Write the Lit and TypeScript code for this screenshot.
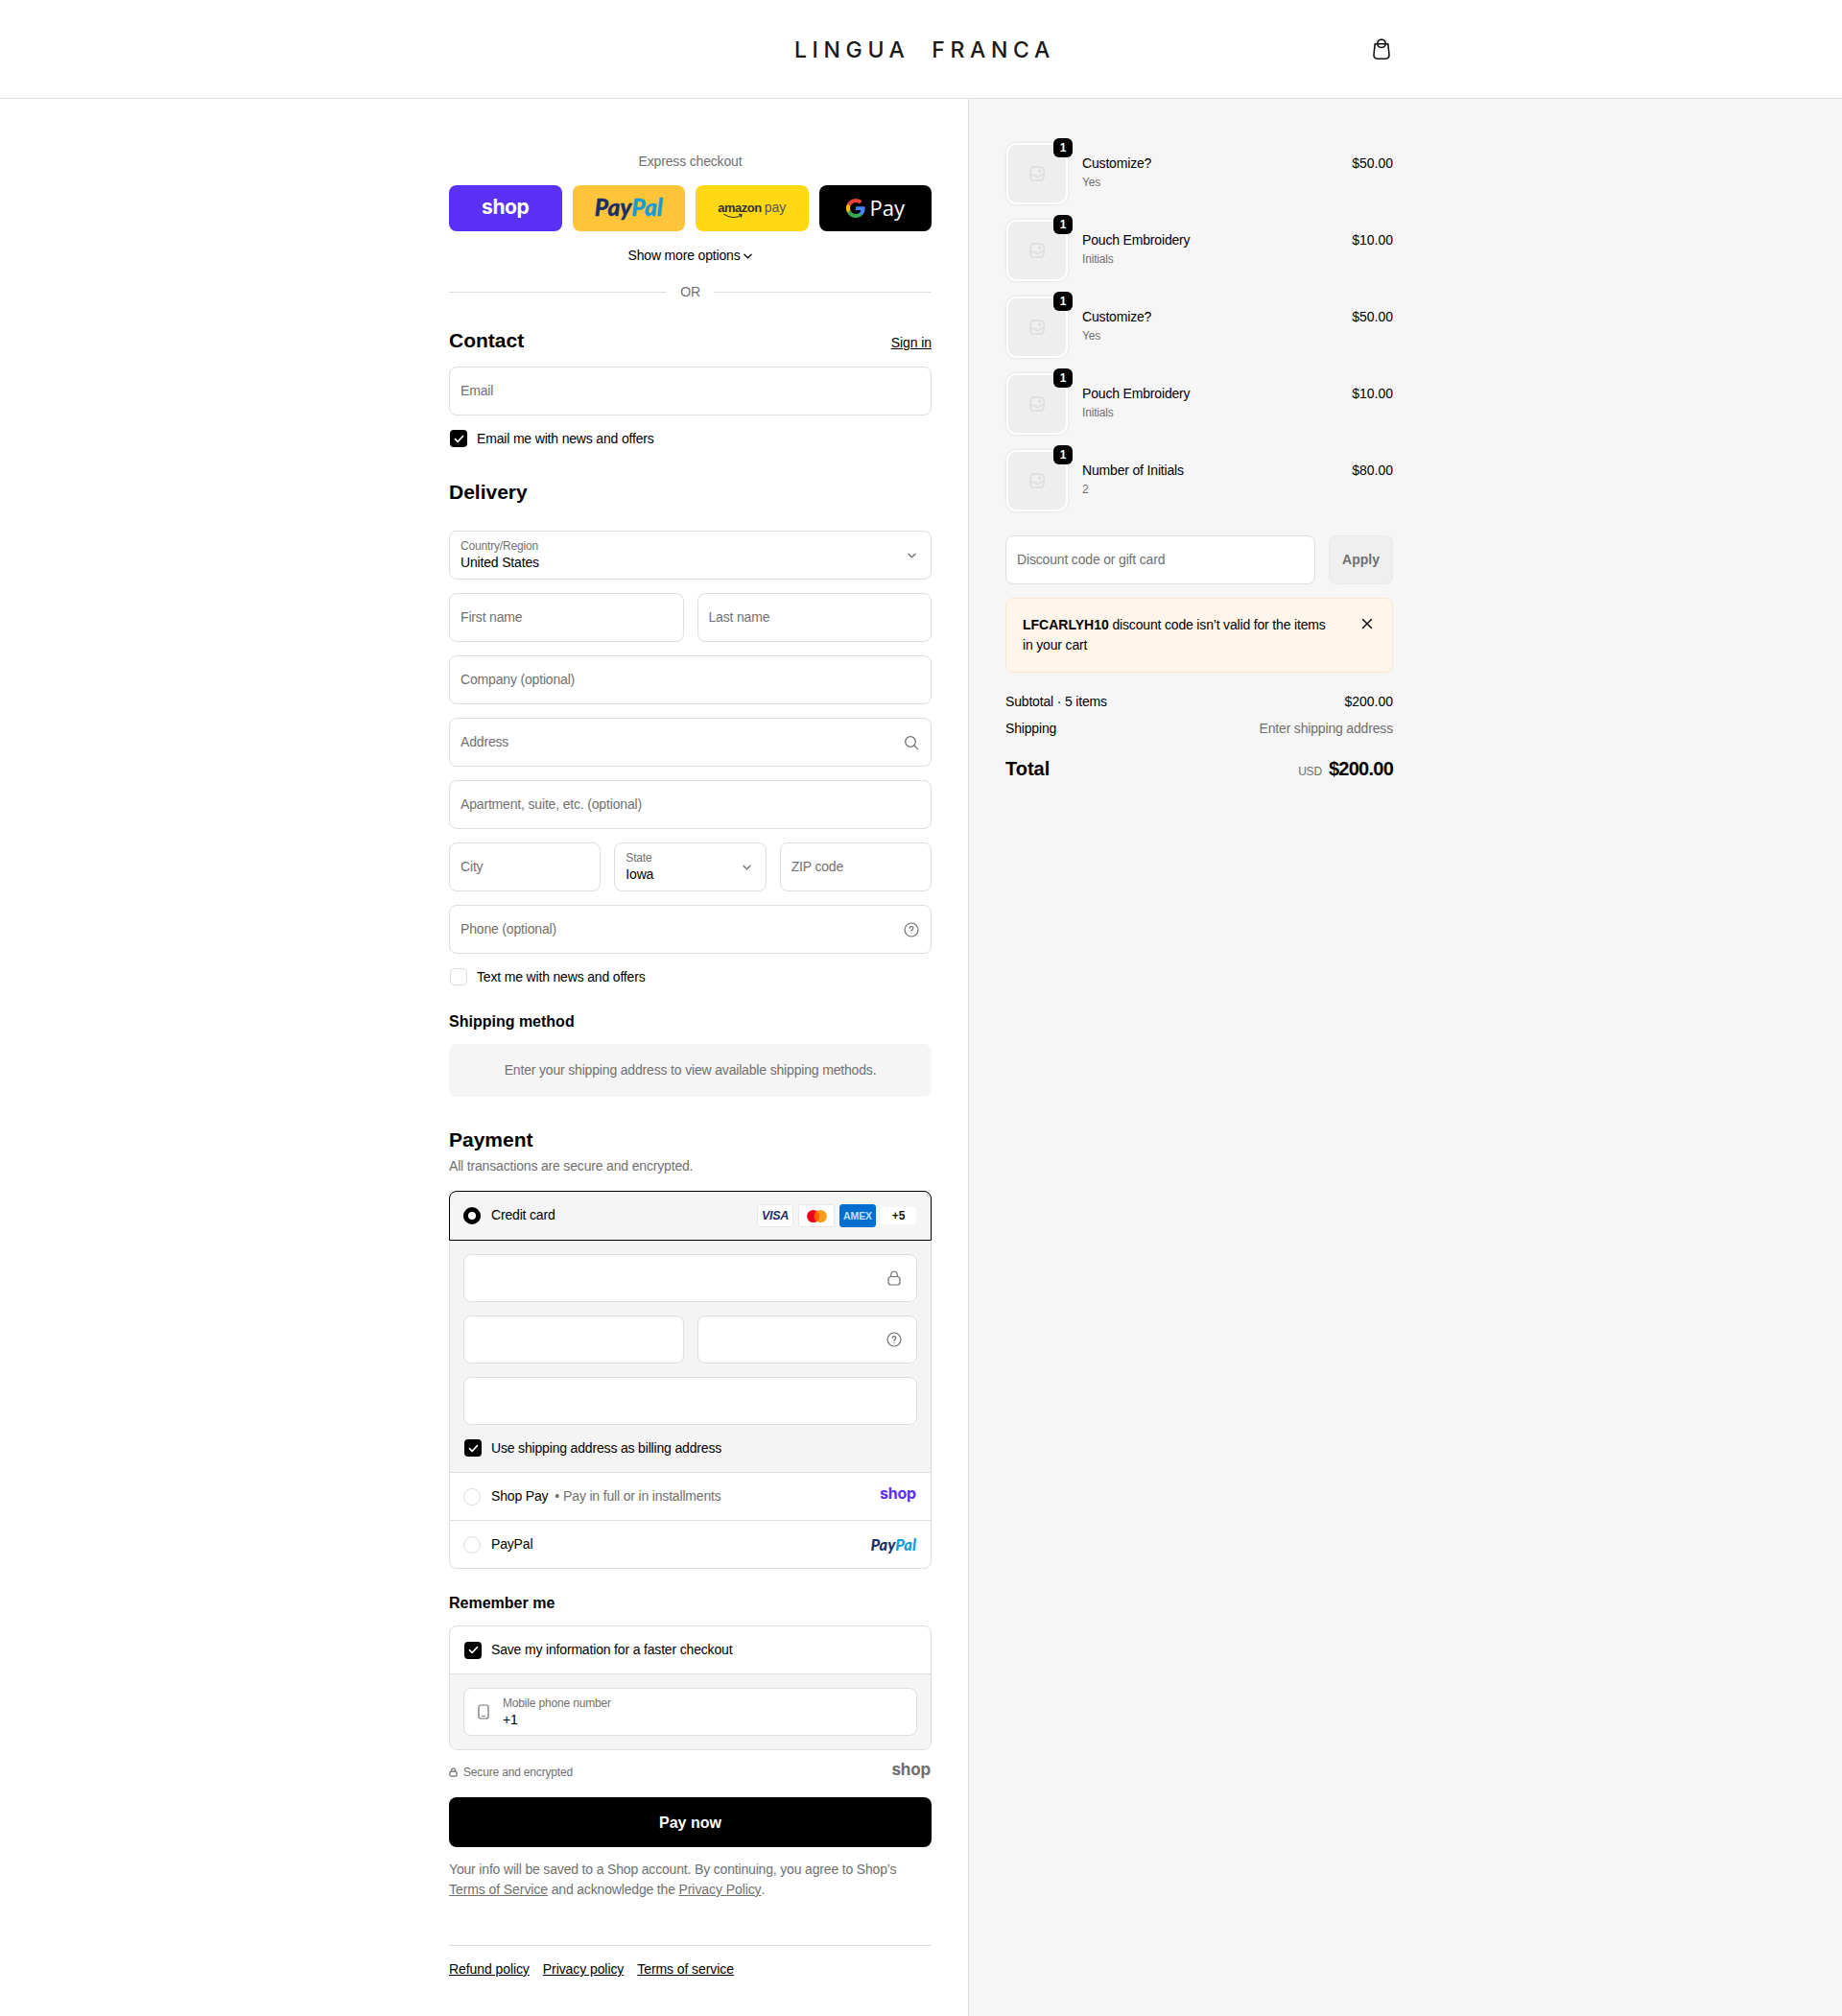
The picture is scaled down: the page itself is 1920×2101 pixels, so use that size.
import { LitElement, html, css, svg } from 'lit';
import { customElement } from 'lit/decorators.js';

const items = [
  { title: 'Customize?', sub: 'Yes', price: '$50.00' },
  { title: 'Pouch Embroidery', sub: 'Initials', price: '$10.00' },
  { title: 'Customize?', sub: 'Yes', price: '$50.00' },
  { title: 'Pouch Embroidery', sub: 'Initials', price: '$10.00' },
  { title: 'Number of Initials', sub: '2', price: '$80.00' },
];

const chevron = html`<svg class="chev" viewBox="0 0 10 6" width="10" height="6" fill="none" stroke="currentColor" stroke-width="1.4" stroke-linecap="round" stroke-linejoin="round"><path d="M1 1l4 4 4-4" /></svg>`;
const helpIcon = html`<svg class="ico" viewBox="0 0 16 16" width="16" height="16" fill="none" stroke="#707070" stroke-width="1.2" stroke-linecap="round"><circle cx="8" cy="8" r="7" /><path d="M6.2 6.3a1.8 1.8 0 1 1 2.7 1.6c-.6.4-.9.7-.9 1.4" /><path d="M8 11.5v.1" /></svg>`;
const lockIcon = html`<svg class="ico" viewBox="0 0 16 16" width="16" height="16" fill="none" stroke="#707070" stroke-width="1.2" stroke-linejoin="round"><rect x="2" y="6.5" width="12" height="8.5" rx="2.5" /><path d="M4.8 6.5V4.2a3.2 3.2 0 0 1 6.4 0v2.3" /></svg>`;
const searchIcon = html`<svg class="ico" viewBox="0 0 16 16" width="16" height="16" fill="none" stroke="#707070" stroke-width="1.3" stroke-linecap="round"><circle cx="7" cy="7" r="5.3" /><path d="M11 11l3.6 3.6" /></svg>`;
const checkMark = html`<svg viewBox="0 0 12 10" width="11" height="9" fill="none" stroke="#fff" stroke-width="1.8" stroke-linecap="round" stroke-linejoin="round"><path d="M1.5 5.2l3 3 6-6.5" /></svg>`;

// the multi coloured G of the Google Pay button
const gMark = svg`<path fill="#4285F4" d="M19.6 10.2c0-.7-.1-1.4-.2-2H10v3.8h5.4a4.6 4.6 0 0 1-2 3v2.5h3.2c1.900-1.700 3-4.300 3-7.300z"/><path fill="#34A853" d="M10 20c2.700 0 5-.9 6.600-2.500l-3.200-2.500c-.9.600-2 1-3.400 1-2.600 0-4.800-1.800-5.600-4.100H1.100v2.600A10 10 0 0 0 10 20z"/><path fill="#FBBC05" d="M4.400 11.900a6 6 0 0 1 0-3.800V5.500H1.100a10 10 0 0 0 0 9z"/><path fill="#EA4335" d="M10 4c1.500 0 2.800.5 3.800 1.500l2.900-2.900A10 10 0 0 0 1.100 5.500l3.300 2.600C5.200 5.800 7.400 4 10 4z"/>`;

@customElement('app-root')
export class AppRoot extends LitElement {
  static styles = css`
    :host {
      display: block;
      min-height: 2101px;
      font-family: 'Liberation Sans', Arial, sans-serif;
      font-size: 14px;
      line-height: 21px;
      letter-spacing: -0.17px;
      color: #000;
      background: #fff;
    }
    * {
      box-sizing: border-box;
    }
    a {
      color: inherit;
      letter-spacing: -0.08px;
    }
    b,
    h2,
    h3,
    .apply,
    .pay-now,
    .badge,
    .price,
    .num {
      letter-spacing: 0;
    }
    .muted {
      color: #707070;
    }

    .top {
      height: 103px;
      border-bottom: 1px solid #dedede;
      position: relative;
      display: flex;
      align-items: center;
      justify-content: center;
    }
    .logo {
      font-family: Inter, sans-serif;
      font-size: 23px;
      font-weight: 500;
      letter-spacing: 5.65px;
      word-spacing: 11px;
      color: #1a1a1a;
      line-height: 28px;
      margin: 1px 0 0 8px;
    }
    .bag {
      position: absolute;
      left: 1429.5px;
      top: 40px;
    }

    .page {
      display: flex;
      min-height: 1998px;
    }
    .main {
      width: 1010px;
      flex: none;
      border-right: 1px solid #dedede;
      padding: 55px 38px 0 468px;
    }
    .side {
      flex: 1;
      background: #f6f6f6;
      padding: 45px 0 0 38px;
    }
    .side-in {
      width: 404px;
    }

    .center {
      text-align: center;
    }
    .express {
      display: grid;
      grid-template-columns: repeat(4, 1fr);
      gap: 11px;
      margin-top: 14px;
    }
    .pay-btn {
      height: 48px;
      border-radius: 8px;
      display: flex;
      align-items: center;
      justify-content: center;
      gap: 5px;
    }
    .b-shop {
      background: #5a31f4;
    }
    .b-pp {
      background: #ffc439;
    }
    .b-amz {
      background: #ffd814;
    }
    .b-g {
      background: #000;
    }
    .shop-mark {
      font-family: Inter, sans-serif;
      font-weight: 700;
      letter-spacing: -0.4px;
      color: #fff;
      font-size: 21px;
      line-height: 1;
      margin-top: -3px;
    }
    .pp-mark {
      font-family: Lato, sans-serif;
      font-style: italic;
      font-weight: 900;
      font-size: 24.5px;
      letter-spacing: 0;
      line-height: 1;
      color: #1a3068;
      -webkit-text-stroke: 0.3px currentColor;
      margin-top: -1px;
    }
    .pp-mark span {
      color: #179bd7;
    }
    .amz {
      position: relative;
      display: flex;
      align-items: baseline;
      gap: 3px;
      line-height: 1;
      color: #333;
      margin-top: -3px;
    }
    .amz b {
      font-size: 13px;
      letter-spacing: -0.5px;
    }
    .amz i {
      font-style: normal;
      font-size: 14px;
      letter-spacing: 0;
      color: #555;
    }
    .amz svg {
      position: absolute;
      left: 6px;
      top: 13px;
    }
    .g-pay {
      font-family: 'Open Sans', sans-serif;
      color: #fff;
      font-size: 22px;
      letter-spacing: 0;
      line-height: 1;
      margin-top: -3px;
    }
    .more {
      margin-top: 15px;
      display: flex;
      justify-content: center;
      align-items: center;
      gap: 4px;
    }
    .more .chev {
      width: 9px;
      margin-top: 1px;
    }
    .or {
      margin-top: 17px;
      display: flex;
      align-items: center;
      gap: 14px;
      color: #707070;
    }
    .or::before,
    .or::after {
      content: '';
      flex: 1;
      height: 1px;
      background: #dedede;
    }

    h2 {
      font-size: 21px;
      line-height: 26px;
      margin: 0;
      font-weight: 700;
    }
    h3 {
      font-size: 16px;
      line-height: 20px;
      margin: 0;
      font-weight: 700;
    }
    .head {
      display: flex;
      justify-content: space-between;
      align-items: baseline;
      margin-top: 27px;
    }
    .head-delivery {
      margin-top: 34px;
    }
    .after-head {
      margin-top: 14px;
    }

    .field {
      height: 51px;
      border: 1px solid #dedede;
      border-radius: 8px;
      background: #fff;
      padding: 0 11px;
      display: flex;
      align-items: center;
      justify-content: space-between;
      color: #707070;
      min-width: 0;
    }
    .field .ico {
      margin-left: auto;
      margin-right: 1px;
    }
    .panel .field .ico {
      margin-right: 4px;
    }
    .sel > div {
      display: flex;
      flex-direction: column;
    }
    .sel small {
      font-size: 12px;
      line-height: 15px;
      color: #707070;
      margin-top: -1px;
    }
    .sel span {
      font-size: 14px;
      line-height: 18px;
      color: #000;
    }
    .sel .chev {
      width: 9px;
      margin-right: 4px;
    }
    .stack {
      display: grid;
      gap: 14px;
    }
    .delivery {
      margin-top: 27px;
    }
    .two {
      display: grid;
      grid-template-columns: 1fr 1fr;
      gap: 14px;
    }
    .three {
      display: grid;
      grid-template-columns: 1fr 1fr 1fr;
      gap: 14px;
    }

    .check {
      display: flex;
      align-items: center;
      gap: 10px;
      height: 18px;
      padding-left: 1px;
    }
    .main > .check {
      margin-top: 15px;
    }
    .box {
      width: 18px;
      height: 18px;
      flex: none;
      border-radius: 4px;
      background: #000;
      display: flex;
      align-items: center;
      justify-content: center;
    }
    .box.off {
      background: #fff;
      border: 1px solid #dedede;
    }
    .sub-head {
      margin-top: 28px;
    }
    .note {
      height: 55px;
      border-radius: 8px;
      background: #f5f5f5;
      color: #707070;
      display: flex;
      align-items: center;
      justify-content: center;
      margin-top: 13px;
    }
    .pay-head {
      margin-top: 32px;
    }
    .pay-sub {
      margin-top: 4px;
    }

    .panel-box {
      border: 1px solid #dedede;
      border-radius: 8px;
      margin-top: 15px;
    }
    .pay-row {
      height: 50px;
      display: flex;
      align-items: center;
      padding: 0 15px 0 14px;
      gap: 11px;
      border-top: 1px solid #dedede;
    }
    .pay-row.selected {
      height: 52px;
      margin: -1px -1px 0;
      padding: 0 15px 0 14px;
      border: 1px solid #000;
      border-radius: 8px 8px 0 0;
      background: #f5f5f5;
    }
    .pay-label {
      margin-top: -2px;
    }
    .radio {
      width: 18px;
      height: 18px;
      flex: none;
      border-radius: 50%;
      border: 1px solid #dedede;
      background: #fff;
    }
    .radio.on {
      border: 5.5px solid #000;
    }
    .card-logos {
      margin-left: auto;
      display: flex;
      align-items: center;
      gap: 5px;
    }
    .card {
      width: 38px;
      height: 24px;
      border-radius: 3px;
      background: #fff;
      border: 1px solid #e8e8e8;
      display: flex;
      align-items: center;
      justify-content: center;
      font-size: 11px;
      letter-spacing: 0;
      line-height: 1;
    }
    .visa {
      font-weight: 700;
      font-style: italic;
      color: #1a2a6c;
      font-size: 12.5px;
      letter-spacing: -0.3px;
    }
    .amex {
      background: #016fd0;
      border-color: #016fd0;
      color: #bfe0fb;
      font-size: 10.5px;
      font-weight: 700;
      letter-spacing: -0.1px;
    }
    .plus {
      height: 18px;
      width: 37px;
      border: none;
      font-weight: 700;
      font-size: 12px;
      color: #111;
    }
    .panel {
      background: #f4f4f4;
      padding: 14px 14px 16px;
    }
    .panel .field {
      height: 50px;
    }
    .panel .check {
      margin-top: 15px;
    }
    .sep {
      color: #707070;
      margin: 0 -4px;
    }
    .sep-text {
      margin-left: -3px;
    }
    .mini-shop {
      margin-left: auto;
      font-family: Inter, sans-serif;
      font-weight: 700;
      font-size: 16px;
      line-height: 1;
      color: #5a31f4;
      letter-spacing: -0.2px;
      margin-top: -8px;
    }
    .mini-pp {
      margin-left: auto;
      font-family: Lato, sans-serif;
      font-style: italic;
      font-weight: 900;
      font-size: 16.4px;
      letter-spacing: 0;
      line-height: 1;
      color: #1a3068;
      margin-top: 2px;
    }
    .mini-pp span {
      color: #179bd7;
    }

    .rem-head {
      margin-top: 26px;
    }
    .rem-box {
      margin-top: 13px;
    }
    .rem-top {
      height: 50px;
      display: flex;
      align-items: center;
      padding: 0 14px;
      border-bottom: 1px solid #dedede;
    }
    .rem-panel {
      background: #f5f5f5;
      padding: 14px;
      border-radius: 0 0 8px 8px;
    }
    .phone {
      height: 50px;
      justify-content: flex-start;
      gap: 14px;
    }
    .phone svg {
      margin-left: 3px;
    }
    .phone .sel-in {
      display: flex;
      flex-direction: column;
    }
    .phone small {
      font-size: 12px;
      line-height: 15px;
    }
    .phone span {
      color: #000;
      line-height: 18px;
    }
    .secure {
      margin-top: 11px;
      height: 24px;
      display: flex;
      align-items: center;
      justify-content: space-between;
      color: #707070;
      font-size: 12px;
    }
    .secure > div {
      display: flex;
      align-items: center;
      gap: 6px;
    }
    .grey-shop {
      font-family: Inter, sans-serif;
      font-weight: 700;
      font-size: 17px;
      line-height: 1;
      color: #707070;
      letter-spacing: -0.2px;
      margin: -5px 1px 0 0;
    }
    .pay-now {
      height: 52px;
      border-radius: 8px;
      background: #000;
      color: #fff;
      font-weight: 700;
      font-size: 16px;
      display: flex;
      align-items: center;
      justify-content: center;
      margin-top: 14px;
    }
    .terms {
      margin: 13px 0 0;
      color: #707070;
    }
    .foot {
      margin-top: 47px;
      border-top: 1px solid #dedede;
      padding-top: 14px;
      display: flex;
      gap: 14px;
    }

    .item {
      display: flex;
      height: 66px;
      margin-bottom: 14px;
    }
    .thumb {
      position: relative;
      width: 64px;
      height: 64px;
      margin: 1px;
      flex: none;
      background: #eeeeee;
      border: 2px solid #fff;
      border-radius: 10px;
      box-shadow: 0 0 3px rgba(0, 0, 0, 0.12);
      display: flex;
      align-items: center;
      justify-content: center;
    }
    .badge {
      position: absolute;
      top: -7px;
      right: -7px;
      width: 20px;
      height: 20px;
      border-radius: 6px;
      background: #000;
      color: #fff;
      font-size: 12px;
      font-weight: 700;
      line-height: 20px;
      text-align: center;
    }
    .item-text {
      margin-left: 14px;
      padding-top: 12px;
      flex: 1;
    }
    .item-sub {
      font-size: 12px;
      line-height: 18px;
      color: #707070;
    }
    .price {
      padding-top: 12px;
    }
    .discount {
      display: flex;
      gap: 14px;
      margin-top: 24px;
    }
    .discount .field {
      flex: 1;
    }
    .apply {
      width: 67px;
      height: 51px;
      border-radius: 8px;
      background: #efefef;
      border: 1px solid #e8e8e8;
      color: #707070;
      font-weight: 700;
      display: flex;
      align-items: center;
      justify-content: center;
    }
    .alert {
      position: relative;
      margin-top: 14px;
      height: 78px;
      background: #fff5ea;
      border: 1px solid #f6e6d2;
      border-radius: 8px;
      padding: 17px 60px 0 17px;
    }
    .alert svg {
      position: absolute;
      right: 20px;
      top: 20px;
    }
    .row {
      display: flex;
      justify-content: space-between;
    }
    .row-sub {
      margin-top: 20px;
    }
    .row-ship {
      margin-top: 7px;
    }
    .total {
      align-items: baseline;
      margin-top: 18px;
    }
    .total b {
      font-size: 20px;
      line-height: 26px;
    }
    .total .amount {
      letter-spacing: -0.75px;
    }
    .total small {
      font-size: 12px;
      color: #707070;
      margin-right: 7px;
    }
  `;

  private field(label: string, extra: unknown = null) {
    return html`<div class="field"><span>${label}</span>${extra}</div>`;
  }

  private select(label: string, value: string) {
    return html`<div class="field sel">
      <div><small>${label}</small><span>${value}</span></div>
      ${chevron}
    </div>`;
  }

  private check(label: string, on = true) {
    return html`<div class="check">
      <span class="box ${on ? '' : 'off'}">${on ? checkMark : null}</span><span>${label}</span>
    </div>`;
  }

  private renderItem(it: { title: string; sub: string; price: string }) {
    return html`<div class="item">
      <div class="thumb">
        <svg viewBox="0 0 16 16" width="16" height="16" fill="none" stroke="#dcdcdc" stroke-width="1.5">
          <rect x="1" y="1" width="14" height="14" rx="3.500" />
          <path d="M1 10.500c2-2 3.500-2 5 -.5s3 2 4 1 3-2 5-1.500" />
          <circle cx="10.800" cy="5.200" r=".8" />
        </svg>
        <span class="badge">1</span>
      </div>
      <div class="item-text">
        <div>${it.title}</div>
        <div class="item-sub">${it.sub}</div>
      </div>
      <div class="price">${it.price}</div>
    </div>`;
  }

  private renderMain() {
    return html`<div class="main">
      <div class="center muted">Express checkout</div>
      <div class="express">
        <div class="pay-btn b-shop"><span class="shop-mark">shop</span></div>
        <div class="pay-btn b-pp"><span class="pp-mark">Pay<span>Pal</span></span></div>
        <div class="pay-btn b-amz">
          <span class="amz">
            <b>amazon</b><i>pay</i>
            <svg viewBox="0 0 32 7" width="26" height="6" fill="none" stroke="#333" stroke-width="1.400" stroke-linecap="round"><path d="M1 1.500c7 5 16 5 22 1" /><path d="M20.500 1.500l3 .5-.8 3" /></svg>
          </span>
        </div>
        <div class="pay-btn b-g">
          <svg viewBox="0 0 20 20" width="20" height="20">${gMark}</svg><span class="g-pay">Pay</span>
        </div>
      </div>
      <div class="more">Show more options ${chevron}</div>
      <div class="or">OR</div>

      <div class="head"><h2>Contact</h2><a href="#">Sign in</a></div>
      <div class="after-head">${this.field('Email')}</div>
      ${this.check('Email me with news and offers')}

      <div class="head head-delivery"><h2>Delivery</h2></div>
      <div class="stack delivery">
        ${this.select('Country/Region', 'United States')}
        <div class="two">${this.field('First name')}${this.field('Last name')}</div>
        ${this.field('Company (optional)')}
        ${this.field('Address', searchIcon)}
        ${this.field('Apartment, suite, etc. (optional)')}
        <div class="three">${this.field('City')}${this.select('State', 'Iowa')}${this.field('ZIP code')}</div>
        ${this.field('Phone (optional)', helpIcon)}
      </div>
      ${this.check('Text me with news and offers', false)}

      <h3 class="sub-head">Shipping method</h3>
      <div class="note">Enter your shipping address to view available shipping methods.</div>

      <h2 class="pay-head">Payment</h2>
      <div class="muted pay-sub">All transactions are secure and encrypted.</div>
      <div class="panel-box">
        <div class="pay-row selected">
          <span class="radio on"></span><span class="pay-label">Credit card</span>
          <div class="card-logos">
            <span class="card visa">VISA</span>
            <span class="card">
              <svg viewBox="0 0 24 16" width="23" height="15"><circle cx="8" cy="8" r="7" fill="#eb001b" /><circle cx="16" cy="8" r="7" fill="#f79e1b" /><path d="M12 2.300a7 7 0 0 1 0 11.400 7 7 0 0 1 0-11.400z" fill="#ff5f00" /></svg>
            </span>
            <span class="card amex">AMEX</span>
            <span class="card plus">+5</span>
          </div>
        </div>
        <div class="panel">
          <div class="stack">
            <div class="field">${lockIcon}</div>
            <div class="two"><div class="field"></div><div class="field">${helpIcon}</div></div>
            <div class="field"></div>
          </div>
          ${this.check('Use shipping address as billing address')}
        </div>
        <div class="pay-row">
          <span class="radio"></span>
          <span>Shop Pay</span><span class="sep">•</span>
          <span class="muted sep-text">Pay in full or in installments</span>
          <span class="mini-shop">shop</span>
        </div>
        <div class="pay-row">
          <span class="radio"></span><span>PayPal</span>
          <span class="mini-pp">Pay<span>Pal</span></span>
        </div>
      </div>

      <h3 class="rem-head">Remember me</h3>
      <div class="panel-box rem-box">
        <div class="rem-top">${this.check('Save my information for a faster checkout')}</div>
        <div class="rem-panel">
          <div class="field phone">
            <svg viewBox="0 0 12 16" width="12" height="16" fill="none" stroke="#707070" stroke-width="1.200"><rect x="1" y="1" width="10" height="14" rx="2" /><path d="M4.500 12.500h3" /></svg>
            <div class="sel-in"><small>Mobile phone number</small><span>+1</span></div>
          </div>
        </div>
      </div>
      <div class="secure">
        <div>
          <svg viewBox="0 0 10 11" width="9" height="10" fill="none" stroke="#707070" stroke-width="1.400"><rect x="1" y="4.500" width="8" height="5.500" rx="1.500" /><path d="M3 4.500V3a2 2 0 0 1 4 0v1.500" /></svg>
          <span>Secure and encrypted</span>
        </div>
        <span class="grey-shop">shop</span>
      </div>
      <div class="pay-now">Pay now</div>
      <p class="terms">
        Your info will be saved to a Shop account. By continuing, you agree to Shop’s<br />
        <a href="#">Terms of Service</a> and acknowledge the <a href="#">Privacy Policy</a>.
      </p>
      <div class="foot">
        <a href="#">Refund policy</a><a href="#">Privacy policy</a><a href="#">Terms of service</a>
      </div>
    </div>`;
  }

  private renderSide() {
    return html`<div class="side">
      <div class="side-in">
        ${items.map((it) => this.renderItem(it))}
        <div class="discount">
          ${this.field('Discount code or gift card')}
          <div class="apply">Apply</div>
        </div>
        <div class="alert">
          <div><b>LFCARLYH10</b> discount code isn’t valid for the items</div>
          <div>in your cart</div>
          <svg viewBox="0 0 12 12" width="12" height="12" fill="none" stroke="#111" stroke-width="1.500" stroke-linecap="round"><path d="M1.500 1.500l9 9M10.500 1.500l-9 9" /></svg>
        </div>
        <div class="row row-sub"><span>Subtotal · 5 items</span><span class="num">$200.00</span></div>
        <div class="row row-ship"><span>Shipping</span><span class="muted">Enter shipping address</span></div>
        <div class="row total"><b>Total</b><span><small>USD</small><b class="amount">$200.00</b></span></div>
      </div>
    </div>`;
  }

  render() {
    return html`
      <div class="top">
        <div class="logo">LINGUA FRANCA</div>
        <svg class="bag" viewBox="0 0 20 22" width="20" height="22" fill="none" stroke="#111" stroke-width="1.600" stroke-linejoin="round" stroke-linecap="round">
          <path d="M3.200 5.800h13.600l1.200 11.200c.2 2.400-1.200 4.200-3.500 4.200H5.500c-2.300 0-3.700-1.800-3.500-4.200z" />
          <path d="M5.800 5.500a4.200 4.400 0 1 1 8.400 0c0 2.300-1.900 4-4.200 4s-4.200-1.700-4.200-4z" />
        </svg>
      </div>
      <div class="page">${this.renderMain()}${this.renderSide()}</div>
    `;
  }
}
